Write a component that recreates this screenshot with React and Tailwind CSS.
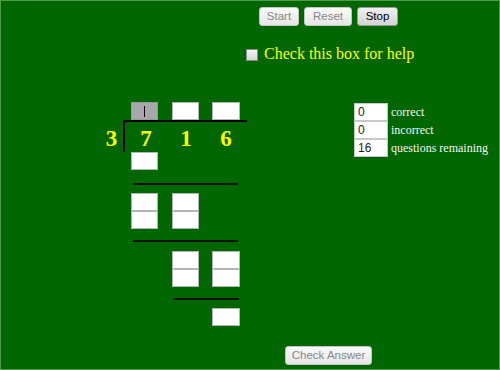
import React from "react";

const serif = "font-['Liberation_Serif','Times_New_Roman',serif]";
const sans = "font-['Liberation_Sans',Arial,sans-serif]";

function Box({ w = "w-[27px]" }) {
  return <div className={`${w} h-[18px] bg-white border border-[#b4b4b4] box-border`} />;
}

function Stack({ w = "w-[27px]" }) {
  return (
    <div className="flex flex-col">
      <Box w={w} />
      <Box w={w} />
    </div>
  );
}

function Btn({ children, w, dark }) {
  return (
    <div
      className={`${w} h-[19px] box-border flex items-center justify-center rounded-[3px] border ${
        dark
          ? "border-[#9a9a9a] bg-gradient-to-b from-[#f0f0f0] to-[#d4d4d4] text-black"
          : "border-[#c4c4c4] bg-gradient-to-b from-[#fafafa] to-[#e6e6e6] text-[#888]"
      } ${sans} text-[11.5px] leading-none`}
    >
      {children}
    </div>
  );
}

function ScoreRow({ value, label }) {
  return (
    <div className="flex items-center h-[18px]">
      <div className={`w-[34px] h-[18px] box-border bg-white border border-[#c8c8c8] pl-[3px] flex items-center ${sans} text-[12px] text-[#222]`}>
        {value}
      </div>
      <span className={`ml-[3px] ${serif} text-[12px] text-[#f4f4f4] leading-none`}>{label}</span>
    </div>
  );
}

export default function App() {
  return (
    <div className="w-[500px] h-[370px] bg-[#006600] shadow-[inset_0_0_0_1px_#4c9c4c] flex flex-col overflow-hidden">
      {/* top buttons */}
      <div className="pt-[7px] pl-[259px] flex gap-[5px]">
        <Btn w="w-[40px]">Start</Btn>
        <Btn w="w-[48px]">Reset</Btn>
        <Btn w="w-[41px]" dark>Stop</Btn>
      </div>

      {/* help checkbox */}
      <div className="mt-[18px] h-[20px] pl-[246px] flex items-center">
        <span className="w-[12px] h-[12px] box-border border border-[#8a8a8a] bg-gradient-to-b from-[#f4f4f4] to-[#d8d8d8] mr-[6px] mt-[2px]" />
        <span className={`${serif} text-[16px] leading-[20px] text-[#ffff00]`}>Check this box for help</span>
      </div>

      {/* main area */}
      <div className="mt-[38px] flex">
        {/* division */}
        <div className="ml-[100px] w-[254px] flex flex-col">
          {/* quotient boxes */}
          <div className="pl-[31px] flex h-[18px]">
            <div className="w-[27px] h-[18px] bg-[#a8a8a8] border border-[#999] box-border flex justify-center items-center">
              <div className="w-[1px] h-[11px] bg-black" />
            </div>
            <div className="ml-[14px]">
              <Box />
            </div>
            <div className="ml-[13px]">
              <Box w="w-[28px]" />
            </div>
          </div>
          {/* divisor / dividend */}
          <div className="flex h-[32px]">
            <div className={`w-[23px] text-center ${serif} font-bold text-[23px] text-[#ffff00] pt-[6px] leading-[26px]`}>3</div>
            <div className="w-[124px] h-[32px] box-border border-t-2 border-l-2 border-black pl-[1px] pt-[4px] grid grid-cols-[40px_40px_40px]">
              {["7", "1", "6"].map((d) => (
                <div key={d} className={`text-center ${serif} font-bold text-[23px] leading-[26px] text-[#ffff00]`}>
                  {d}
                </div>
              ))}
            </div>
          </div>
          {/* first product */}
          <div className="pl-[31px]">
            <Box />
          </div>
          <div className="mt-[13px] ml-[33px] w-[105px] h-[2px] bg-[#111]" />
          {/* second step */}
          <div className="mt-[8px] pl-[31px] flex gap-[14px]">
            <Stack />
            <Stack />
          </div>
          <div className="mt-[11px] ml-[33px] w-[105px] h-[2px] bg-[#111]" />
          {/* third step */}
          <div className="mt-[9px] pl-[72px] flex gap-[13px]">
            <Stack />
            <Stack w="w-[28px]" />
          </div>
          <div className="mt-[11px] ml-[73px] w-[66px] h-[2px] bg-[#111]" />
          <div className="mt-[8px] ml-[112px]">
            <Box w="w-[28px]" />
          </div>
        </div>

        {/* score */}
        <div className="mt-[1px] flex flex-col">
          <ScoreRow value="0" label="correct" />
          <ScoreRow value="0" label="incorrect" />
          <ScoreRow value="16" label="questions remaining" />
        </div>
      </div>

      {/* check answer */}
      <div className="mt-[20px] pl-[285px]">
        <Btn w="w-[87px]">Check Answer</Btn>
      </div>
    </div>
  );
}
